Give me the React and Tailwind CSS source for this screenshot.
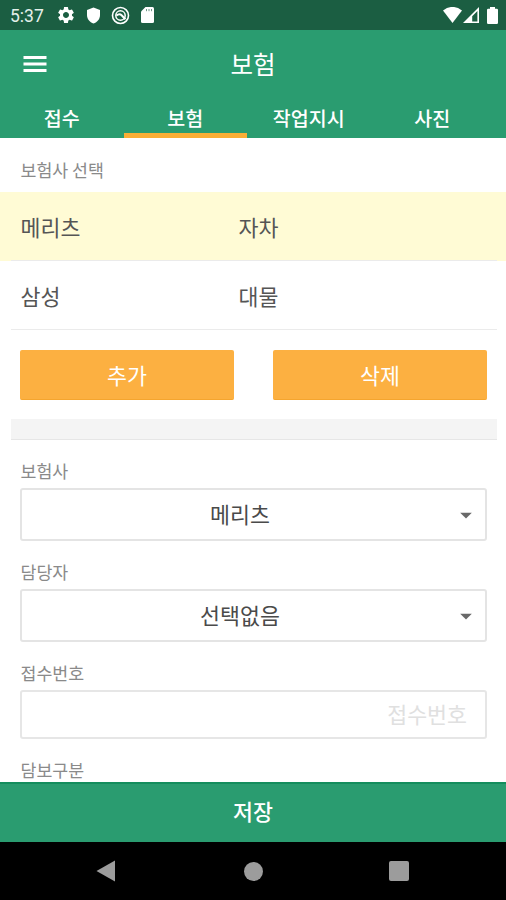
import React, { useState } from "react";
import { MdSettings, MdArrowDropDown } from "react-icons/md";

const tabs = ["접수", "보험", "작업지시", "사진"];

const insurances = [
  { company: "메리츠", type: "자차" },
  { company: "삼성", type: "대물" },
];

const StatusBar = () => (
  <div className="h-[30px] shrink-0 bg-[#1b5e42] flex items-center text-white">
    <span className="ml-[10px] pt-[3px] w-[46px] font-[Roboto] text-[17.5px] leading-none text-[#e4f0ea]">
      5:37
    </span>
    <MdSettings className="w-[20px] h-[20px]" />
    <svg className="ml-[10px] w-[15px] h-[17px]" viewBox="0 0 14 17">
      <path
        d="M7 0.5L13.5 3V8C13.5 12 10.8 15.3 7 16.5C3.2 15.3 0.5 12 0.5 8V3Z"
        fill="currentColor"
      />
    </svg>
    <svg
      className="ml-[10px] w-[19px] h-[19px]"
      viewBox="0 0 19 19"
      fill="none"
      stroke="currentColor"
    >
      <circle cx="9.5" cy="9.5" r="8" strokeWidth="1.6" />
      <circle cx="9.5" cy="9.5" r="4.7" strokeWidth="1.5" />
      <path d="M5.4 9.6Q8.4 7 10.6 9.2L14.4 13.2" strokeWidth="2" />
    </svg>
    <svg className="ml-[11px] w-[13px] h-[16px]" viewBox="0 0 13 16">
      <path
        d="M4.5 0H11.5Q13 0 13 1.5V14.5Q13 16 11.5 16H1.5Q0 16 0 14.5V4.5Z"
        fill="currentColor"
      />
      <path d="M5.5 2V4.2M8 2V4.2M10.5 2V4.2" stroke="#6f9886" />
    </svg>
    <svg className="ml-auto w-[19px] h-[16px]" viewBox="0 0 19 16">
      <path d="M0 3.4Q9.5 -3.6 19 3.4L9.5 16Z" fill="currentColor" />
    </svg>
    <svg className="ml-[1px] w-[17px] h-[16px]" viewBox="0 0 17 16">
      <path
        fillRule="evenodd"
        d="M16 0V16H0ZM14.4 4L9.2 9.2V14.4H14.4Z"
        fill="currentColor"
      />
    </svg>
    <svg className="ml-[7px] mr-[8px] w-[11px] h-[17px]" viewBox="0 0 11 17">
      <path
        d="M3 0H8V1.8H9.8Q11 1.8 11 3V15.8Q11 17 9.8 17H1.2Q0 17 0 15.8V3Q0 1.8 1.2 1.8H3Z"
        fill="currentColor"
      />
    </svg>
  </div>
);

const Label = ({ children }) => (
  <p className="pl-[0.5px] text-[17.3px] leading-6 text-[#8a8a8a]">
    {children}
  </p>
);

const SelectBox = ({ value }) => (
  <button
    type="button"
    className="flex w-full h-[53px] items-center rounded-[3px] border-2 border-[#e4e4e4] text-[21.7px] text-[#4a4a4a]"
  >
    <span className="flex-1 pl-[12px] pr-[6px] pb-[2px] leading-none">
      {value}
    </span>
    <MdArrowDropDown className="w-[28px] h-[28px] mr-[5px] text-[#696969]" />
  </button>
);

const App = () => {
  const [activeTab, setActiveTab] = useState(1);
  const [selected, setSelected] = useState(0);
  const [receiptNo, setReceiptNo] = useState("");

  return (
    <div className="w-full h-screen flex flex-col overflow-hidden bg-white font-['Noto_Sans_CJK_KR',sans-serif]">
      <StatusBar />

      <header className="h-[108px] shrink-0 bg-[#2a9c70] text-white flex flex-col">
        <div className="grid grid-cols-[80px_1fr_80px] h-[68px] items-center">
          <button type="button" className="pl-[23px]">
            <svg className="w-[24px] h-[16px]" viewBox="0 0 24 16">
              <path
                d="M0.5 1.5H23.5M0.5 8H23.5M0.5 14.5H23.5"
                stroke="currentColor"
                strokeWidth="2.8"
              />
            </svg>
          </button>
          <h1 className="text-center text-[24.5px] leading-none">보험</h1>
        </div>
        <nav className="grid grid-cols-4 flex-1 pr-[12px]">
          {tabs.map((tab, index) => (
            <button
              key={tab}
              type="button"
              onClick={() => setActiveTab(index)}
              className={`border-b-[5px] pt-[5px] text-[19.5px] leading-none font-medium ${
                index === activeTab ? "border-[#f9ae36]" : "border-transparent"
              }`}
            >
              {tab}
            </button>
          ))}
        </nav>
      </header>

      <main className="flex-1 min-h-0 overflow-hidden">
        <div className="px-5 pt-5 h-[54px]">
          <Label>보험사 선택</Label>
        </div>

        {insurances.map((item, index) => (
          <div
            key={item.company}
            onClick={() => setSelected(index)}
            className={index === selected ? "bg-[#fffbd5]" : ""}
          >
            <div className="ml-[11px] mr-[9px] h-[69px] pl-[9.5px] pt-[2px] flex items-center border-b border-[#ebebeb] text-[21.7px] text-[#555]">
              <span className="w-[218px]">{item.company}</span>
              <span>{item.type}</span>
            </div>
          </div>
        ))}

        <div className="grid grid-cols-2 gap-[39px] pl-5 pr-[19px] pt-5 pb-[19px]">
          <button
            type="button"
            className="h-[50px] pt-[2px] rounded-[2px] bg-[#fcb041] border-b border-[#f5a52e] text-white text-[21.7px]"
          >
            추가
          </button>
          <button
            type="button"
            className="h-[50px] pt-[2px] rounded-[2px] bg-[#fcb041] border-b border-[#f5a52e] text-white text-[21.7px]"
          >
            삭제
          </button>
        </div>

        <div className="ml-[11px] mr-[9px] h-[21px] bg-[#f4f4f4] border-b border-[#e6e6e6]" />

        <div className="pl-5 pr-[19px] pt-[19px]">
          <Label>보험사</Label>
          <div className="mt-[5px] mb-[19px]">
            <SelectBox value="메리츠" />
          </div>
          <Label>담당자</Label>
          <div className="mt-[5px] mb-[19px]">
            <SelectBox value="선택없음" />
          </div>
          <Label>접수번호</Label>
          <input
            className="mt-[5px] mb-[19px] block w-full h-[49px] rounded-[3px] border-2 border-[#e6e6e6] px-[18px] pb-[2px] text-right text-[21.7px] text-[#4a4a4a] placeholder:text-[#e0e0e0] outline-none"
            placeholder="접수번호"
            value={receiptNo}
            onChange={(e) => setReceiptNo(e.target.value)}
          />
          <Label>담보구분</Label>
        </div>
      </main>

      <button
        type="button"
        className="h-[60px] pb-[4px] shrink-0 bg-[#2a9c70] border-t-2 border-[#148d5d] text-white text-[21.7px] leading-none font-medium"
      >
        저장
      </button>

      <div className="h-[58px] shrink-0 bg-black flex items-center text-[#9c9c9c]">
        <svg className="ml-[96px] w-[19px] h-[22px]" viewBox="0 0 19 22">
          <path d="M0.5 11L19 0.5V21.5Z" fill="currentColor" />
        </svg>
        <div className="ml-[129px] w-[19px] h-[19px] rounded-full bg-[#9c9c9c]" />
        <div className="ml-[126px] w-[20px] h-[20px] rounded-[2px] bg-[#9c9c9c]" />
      </div>
    </div>
  );
};

export default App;
